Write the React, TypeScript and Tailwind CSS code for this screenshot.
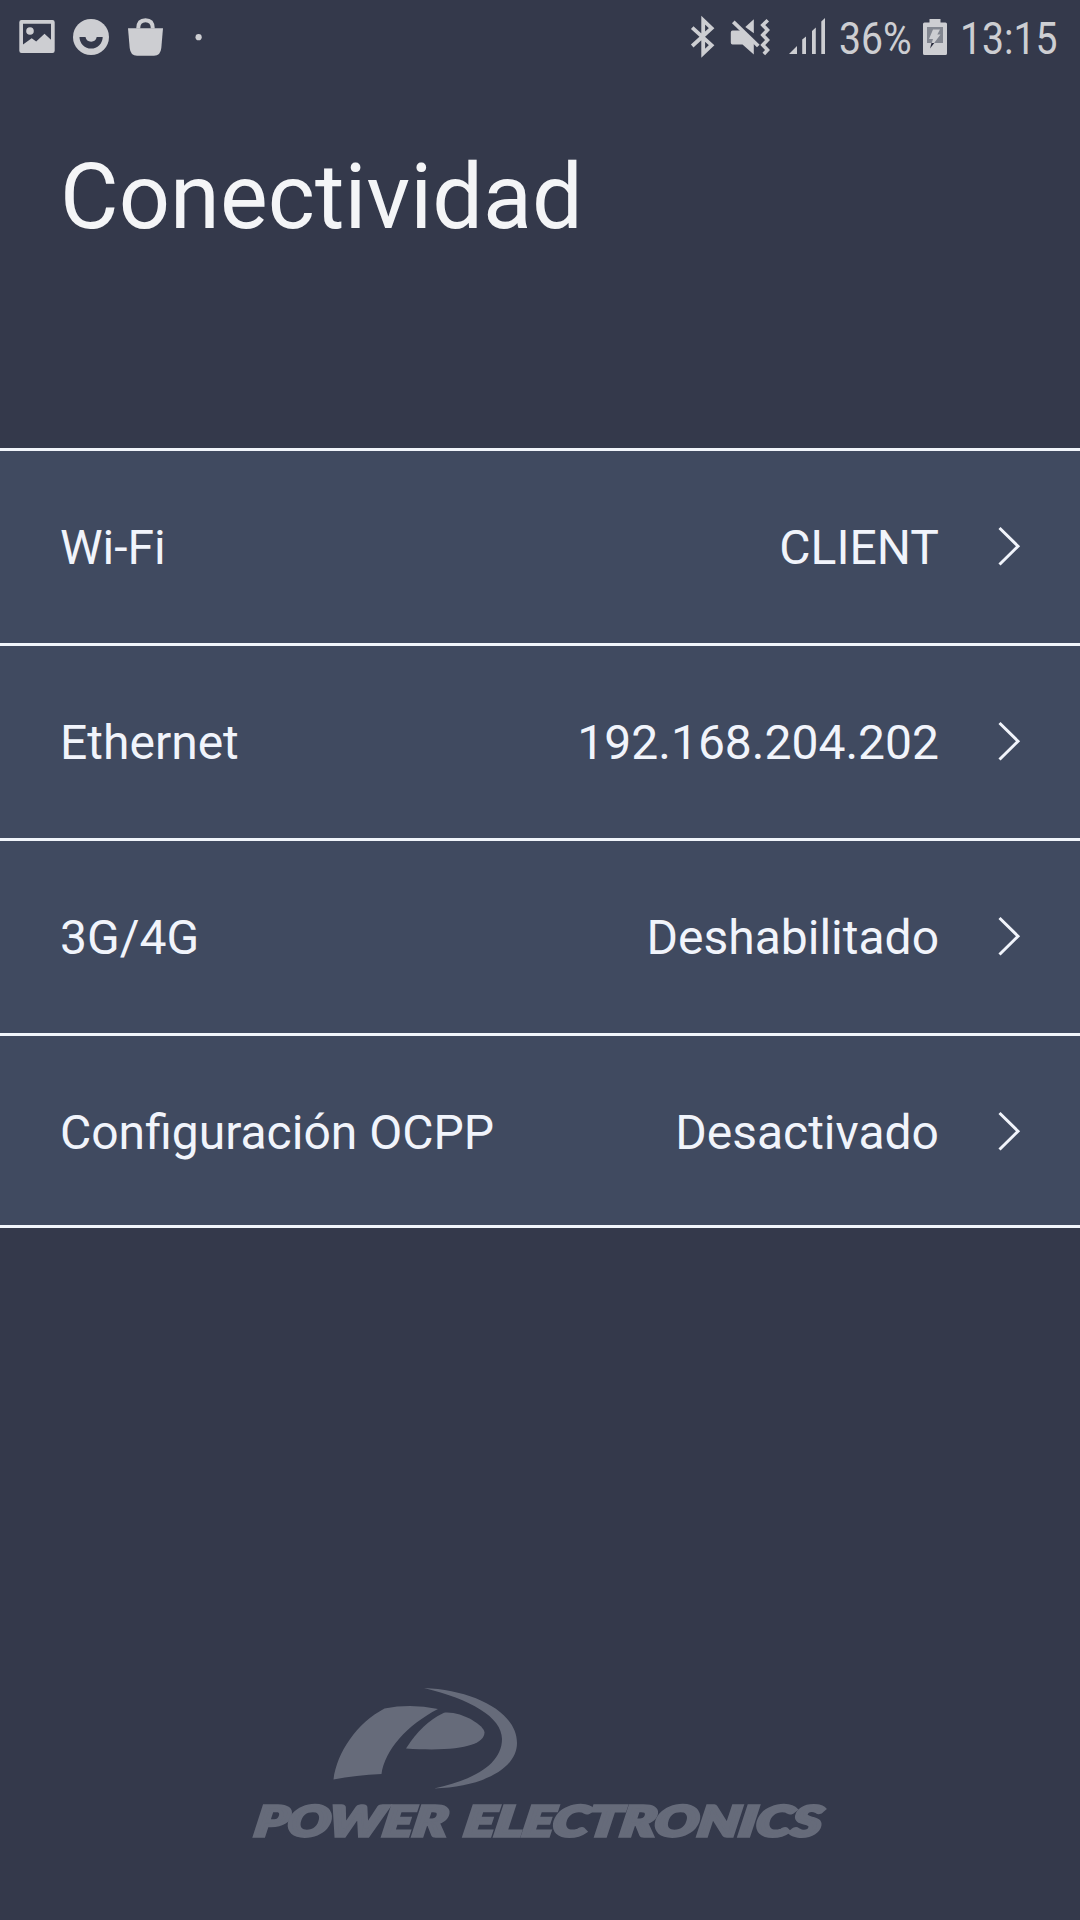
type Row = {
  label: string;
  value: string;
};

const rows: Row[] = [
  { label: "Wi-Fi", value: "CLIENT" },
  { label: "Ethernet", value: "192.168.204.202" },
  { label: "3G/4G", value: "Deshabilitado" },
  { label: "Configuración OCPP", value: "Desactivado" },
];

function NotificationIcons() {
  return (
    <svg width="220" height="72" viewBox="0 0 220 72" fill="#cdced2">
      {/* Gallery */}
      <path
        fillRule="evenodd"
        d="M21.5 20H52.5Q54.7 20 54.7 22.2V50.8Q54.7 53 52.5 53H21.5Q19.3 53 19.3 50.8V22.2Q19.3 20 21.5 20ZM23 23.8V44.5L31.7 38.2L36.2 41.5L44.5 33.8L51 39.8V23.8Z"
      />
      <circle cx="30" cy="31" r="3.8" />
      {/* Smile */}
      <circle cx="91" cy="37" r="18" />
      <path
        d="M79.5 37H85.5A5.7 5.7 0 0 0 96.7 37H102.7A11.6 11.6 0 0 1 79.5 37Z"
        fill="#34394b"
      />
      {/* Shopping bag */}
      <path d="M128 28.3H163L161.3 48Q160.5 55.8 154 55.8H137Q130.5 55.8 129.7 48Z" />
      <path
        d="M138.2 28.5C138.2 22.8 141 20.2 145.5 20.2S152.8 22.8 152.8 28.5"
        fill="none"
        stroke="#cdced2"
        strokeWidth="4"
      />
      <circle cx="198.6" cy="37.2" r="3.1" />
    </svg>
  );
}

function SystemIcons() {
  return (
    <svg width="150" height="72" viewBox="685 0 150 72" fill="#cdced2">
      {/* Bluetooth */}
      <path
        d="M692.2 27.6L711.6 45.2L703.2 53.2V20.2L711.6 28.2L692.2 46"
        fill="none"
        stroke="#cdced2"
        strokeWidth="3.8"
      />
      {/* Muted speaker */}
      <path d="M732.5 30.5H742L753.8 41V54.5L742.5 44.5H732.5Q730.8 44.5 730.8 42.5V32.5Q730.8 30.5 732.5 30.5Z" />
      <path d="M753.8 19.3V33.2L745.3 27Z" />
      <path d="M733.3 21.8L758.3 46" fill="none" stroke="#cdced2" strokeWidth="3.8" />
      <path
        d="M767.8 20.3L762.8 25L767.5 30L762.8 35L767.5 40L762.8 45L767.5 50L763.8 54"
        fill="none"
        stroke="#cdced2"
        strokeWidth="3.6"
      />
      {/* Signal strength */}
      <path d="M789 54L797 46V54Z" />
      <path d="M802.2 39.5L806 36.5V54H802.2Z" />
      <path d="M812 31L815.8 27.5V54H812Z" />
      <path d="M821.3 21.5L825 18V54H821.3Z" />
    </svg>
  );
}

function BatteryIcon() {
  return (
    <svg width="26" height="72" viewBox="922 0 26 72">
      <path
        d="M929.5 19H940.5V22.5H945.5Q947 22.5 947 24V53.5Q947 55 945.5 55H924.5Q923 55 923 53.5V24Q923 22.5 924.5 22.5H929.5Z"
        fill="#cdced2"
      />
      <path d="M927 27H943V43H927Z" fill="#828690" />
      <path d="M933 29.5H940L937.3 34.5H940.5L930 48.5L933 39H929Z" fill="#cdced2" />
      <path d="M931.5 43H934.3L930 48.5Z" fill="#25283a" />
    </svg>
  );
}

function StatusBar() {
  return (
    <div className="flex h-[72px] w-full items-center text-[45px] leading-none text-[#cdced2]">
      <NotificationIcons />
      <div className="ml-auto flex items-center">
        <SystemIcons />
        <span className="ml-1 mt-1 w-[83px]">
          <span className="inline-block origin-left scale-x-[0.87]">36%</span>
        </span>
        <BatteryIcon />
        <span className="ml-3 mt-1 w-[120px]">
          <span className="inline-block origin-left scale-x-[0.87]">13:15</span>
        </span>
      </div>
    </div>
  );
}

function ConnectionRow({ label, value }: Row) {
  return (
    <button
      type="button"
      className="flex h-[195px] w-full items-center border-t-[3px] border-[#f1f5fb] bg-[#404a60] pl-[60px] pr-[58px] text-left text-[48px] leading-none text-[#f1f4fb] last:border-b-[3px] last:pt-[3px]"
    >
      <span className="pt-0.5">{label}</span>
      <span className="ml-auto pt-0.5">{value}</span>
      <svg className="ml-[59px]" width="24" height="42" viewBox="0 0 24 42" fill="none">
        <path d="M1.5 2L20 20.2L1.5 38.5" stroke="#f1f4fb" strokeWidth="3" />
      </svg>
    </button>
  );
}

function BrandLogo() {
  return (
    <svg width="600" height="170" viewBox="240 1680 600 170" fill="#666b7a">
      <path d="M333.5 1779.5C337 1752 357 1723 384.5 1708.5Q411 1703.5 438 1709C407 1725 385 1750 381.5 1774Q356 1775 333.5 1779.5Z" />
      <path d="M406 1748.5Q422 1723 444 1712.7C461 1711 484 1725 484.5 1732.5C484 1745 460 1752 406 1748.5Z" />
      <path d="M424 1688C474 1690 517 1712 517 1743C517 1769 482 1787 434 1788.5C474 1780 502 1764 502 1739C502 1717 470 1699 424 1688Z" />
      <g
        transform="translate(0 1837) skewX(-9)"
        fontFamily="Lato, sans-serif"
        fontSize="41.5"
        fontWeight="900"
        fontStyle="italic"
        stroke="#666b7a"
        strokeWidth="3.4"
      >
        <text x="253" y="-1.2" textLength="192" lengthAdjust="spacingAndGlyphs">
          POWER
        </text>
        <text x="462.5" y="-1.2" textLength="357" lengthAdjust="spacingAndGlyphs">
          ELECTRONICS
        </text>
      </g>
    </svg>
  );
}

export default function App() {
  return (
    <div className="flex h-[1920px] w-[1080px] flex-col overflow-hidden bg-[#34394b] font-['Roboto',sans-serif]">
      <StatusBar />
      <header className="h-[376px] px-[60px] pt-[73px]">
        <h1 className="text-[90px] leading-[105px] tracking-[0.1px] text-[#f4f5f7]">Conectividad</h1>
      </header>
      <main className="flex flex-col">
        {rows.map((row) => (
          <ConnectionRow key={row.label} {...row} />
        ))}
      </main>
      <footer className="mt-auto flex justify-center pb-[70px]">
        <BrandLogo />
      </footer>
    </div>
  );
}
